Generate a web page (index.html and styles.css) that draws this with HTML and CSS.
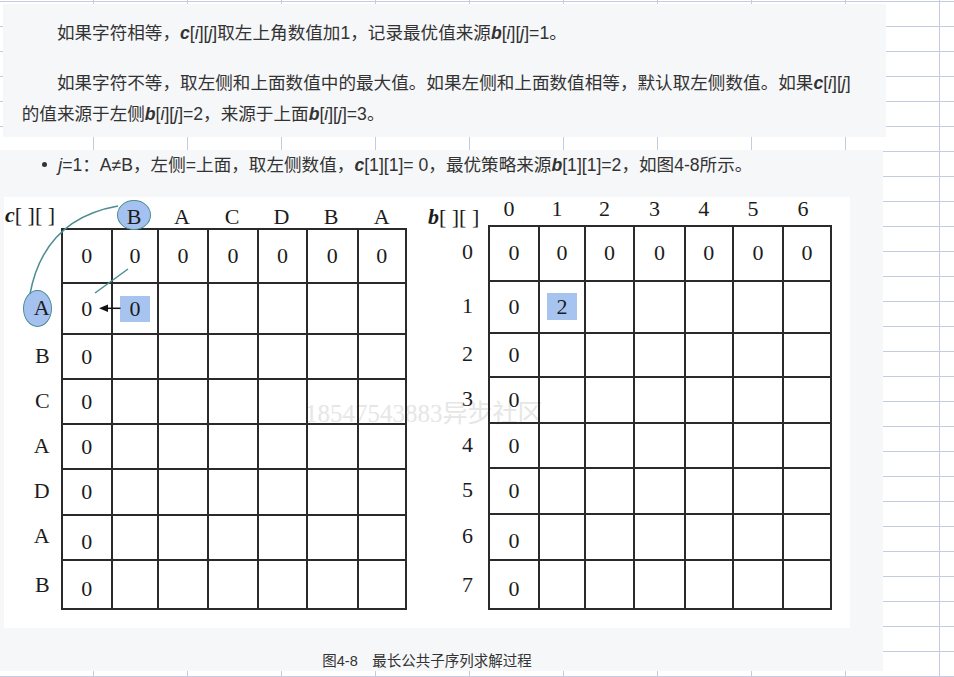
FILE: index.html
```html
<!DOCTYPE html>
<html lang="zh-CN">
<head>
<meta charset="utf-8">
<title>最长公共子序列求解过程</title>
<link rel="stylesheet" href="styles.css">
</head>
<body>
<div class="sheet">
  <section class="note">
    <p>如果字符相等，<span class="tok"><b><i>c</i></b>[<i>i</i>][<i>j</i>]</span><wbr>取左上角数值加1，记录最优值来源<span class="tok"><b><i>b</i></b>[<i>i</i>][<i>j</i>]=1</span>。</p>
    <p>如果字符不等，取左侧和上面数值中的最大值。如果左侧和上面数值相等，默认取左侧数值。如果<span class="tok"><b><i>c</i></b>[<i>i</i>][<i>j</i>]</span><wbr>的值来源于左侧<span class="tok"><b><i>b</i></b>[<i>i</i>][<i>j</i>]=2</span>，来源于上面<span class="tok"><b><i>b</i></b>[<i>i</i>][<i>j</i>]=3</span>。</p>
  </section>
  <section class="step">
    <ul class="bullets">
      <li><i>j</i>=1：A≠B，左侧=上面，取左侧数值，<span class="tok"><b><i>c</i></b>[1][1]= 0</span>，最优策略来源<span class="tok"><b><i>b</i></b>[1][1]=2</span>，如图4-8所示。</li>
    </ul>
    <figure class="fig">
      <div class="canvas">
        <span class="watermark">18547543883异步社区</span>
        <div class="dp dp-c">
          <div class="corner"><span><b><i>c</i></b>[ ][ ]</span></div><div class="h"></div><div class="h"><span class="ring ring-b">B</span></div><div class="h">A</div><div class="h">C</div><div class="h">D</div><div class="h">B</div><div class="h">A</div>
          <div class="l"></div><div class="c">0</div><div class="c">0</div><div class="c">0</div><div class="c">0</div><div class="c">0</div><div class="c">0</div><div class="c">0</div>
          <div class="l"><span class="ring ring-a">A</span></div><div class="c">0</div><div class="c"><span class="hl">0</span></div><div class="c"></div><div class="c"></div><div class="c"></div><div class="c"></div><div class="c"></div>
          <div class="l">B</div><div class="c">0</div><div class="c"></div><div class="c"></div><div class="c"></div><div class="c"></div><div class="c"></div><div class="c"></div>
          <div class="l">C</div><div class="c">0</div><div class="c"></div><div class="c"></div><div class="c"></div><div class="c"></div><div class="c"></div><div class="c"></div>
          <div class="l">A</div><div class="c">0</div><div class="c"></div><div class="c"></div><div class="c"></div><div class="c"></div><div class="c"></div><div class="c"></div>
          <div class="l">D</div><div class="c">0</div><div class="c"></div><div class="c"></div><div class="c"></div><div class="c"></div><div class="c"></div><div class="c"></div>
          <div class="l">A</div><div class="c dn">0</div><div class="c"></div><div class="c"></div><div class="c"></div><div class="c"></div><div class="c"></div><div class="c"></div>
          <div class="l">B</div><div class="c dn">0</div><div class="c"></div><div class="c"></div><div class="c"></div><div class="c"></div><div class="c"></div><div class="c"></div>
        </div>
        <div class="dp dp-b">
          <div class="corner"><span><b><i>b</i></b>[ ][ ]</span></div><div class="h">0</div><div class="h">1</div><div class="h">2</div><div class="h">3</div><div class="h">4</div><div class="h">5</div><div class="h">6</div>
          <div class="l">0</div><div class="c">0</div><div class="c">0</div><div class="c">0</div><div class="c">0</div><div class="c">0</div><div class="c">0</div><div class="c">0</div>
          <div class="l">1</div><div class="c">0</div><div class="c"><span class="hl">2</span></div><div class="c"></div><div class="c"></div><div class="c"></div><div class="c"></div><div class="c"></div>
          <div class="l">2</div><div class="c">0</div><div class="c"></div><div class="c"></div><div class="c"></div><div class="c"></div><div class="c"></div><div class="c"></div>
          <div class="l">3</div><div class="c">0</div><div class="c"></div><div class="c"></div><div class="c"></div><div class="c"></div><div class="c"></div><div class="c"></div>
          <div class="l">4</div><div class="c">0</div><div class="c"></div><div class="c"></div><div class="c"></div><div class="c"></div><div class="c"></div><div class="c"></div>
          <div class="l">5</div><div class="c">0</div><div class="c"></div><div class="c"></div><div class="c"></div><div class="c"></div><div class="c"></div><div class="c"></div>
          <div class="l">6</div><div class="c dn">0</div><div class="c"></div><div class="c"></div><div class="c"></div><div class="c"></div><div class="c"></div><div class="c"></div>
          <div class="l">7</div><div class="c dn">0</div><div class="c"></div><div class="c"></div><div class="c"></div><div class="c"></div><div class="c"></div><div class="c"></div>
        </div>
        <svg class="marks" viewBox="0 0 846 431" width="846" height="431" aria-hidden="true">
          <path d="M26 97 Q40 22 114 9" fill="none" stroke="#4a8e93" stroke-width="1.5"/>
          <line x1="91" y1="96" x2="124" y2="72" stroke="#4a8e93" stroke-width="1.5"/>
          <line x1="102" y1="111.3" x2="116.5" y2="111.3" stroke="#111" stroke-width="1.5"/>
          <polygon points="95,111.3 104,107.6 104,115" fill="#111"/>
        </svg>
      </div>
      <figcaption>图4-8　最长公共子序列求解过程</figcaption>
    </figure>
  </section>
</div>
</body>
</html>
```

FILE: styles.css
```css
* { box-sizing: border-box; }
html, body { margin: 0; padding: 0; }
body {
  width: 954px;
  height: 677px;
  overflow: hidden;
  font-family: "Liberation Sans", "Noto Sans CJK SC", sans-serif;
  color: #333;
}
.sheet {
  height: 677px;
  padding-top: 4px;
  background-color: #fff;
  background-image:
    linear-gradient(to bottom, #c6cce0 1px, transparent 1px),
    linear-gradient(to right, #c6cce0 1px, transparent 1px);
  background-size: 100% 25px, 94px 100%;
  background-position: 0 1px, 93px 0;
}
.tok { white-space: nowrap; }
.note {
  margin-left: 3px;
  width: 883px;
  height: 133px;
  padding: 13.5px 28px 0 18.7px;
  background: #f6f7f9;
}
.note p {
  margin: 0;
  font-size: 17.6px;
  line-height: 31.6px;
  text-indent: 2em;
}
.note p + p { margin-top: 18.5px; }

.step {
  margin-top: 13px;
  width: 883px;
  height: 521px;
  padding-left: 4px;
  background: #f6f7f9;
}
.bullets {
  margin: 0;
  padding: 0 0 0 38px;
  list-style: none;
  font-size: 17.6px;
  line-height: 30px;
}
.bullets li::before {
  content: "";
  display: inline-block;
  width: 5px;
  height: 5px;
  border-radius: 50%;
  background: #333;
  margin-right: 11.3px;
  vertical-align: 4px;
}
.fig { margin: 17px 0 0; width: 846px; }
.canvas {
  position: relative;
  width: 846px;
  height: 431px;
  background: #fff;
  display: flex;
  gap: 17px;
}
.fig figcaption {
  margin-top: 23px;
  text-align: center;
  font-size: 14.5px;
  line-height: 20px;
  color: #333;
}
.watermark {
  position: absolute;
  left: 301px;
  top: 204px;
  font-family: "Liberation Serif", "Noto Sans CJK SC", serif;
  font-size: 25px;
  line-height: 25px;
  color: #e6e6e6;
  white-space: nowrap;
}
.dp {
  position: relative;
  display: grid;
  font-family: "Liberation Serif", "Noto Sans CJK SC", serif;
  font-size: 22px;
  line-height: 22px;
  color: #1c1c1c;
  align-self: flex-start;
}
.dp-c {
  grid-template-columns: 56.7px 50px 46.6px 49.4px 50.6px 48.4px 51px 50.3px;
  grid-template-rows: 31.3px 54px 51px 45px 45px 45px 45.4px 45.6px 51px;
}
.dp-b {
  grid-template-columns: 64px 50px 46px 49.3px 50.7px 47.7px 50.6px 49.7px;
  grid-template-rows: 28px 54.7px 52px 44.6px 46px 45px 45.7px 46px 51.3px;
}
.dp > div {
  display: flex;
  align-items: center;
  justify-content: center;
}
.dp .h { align-items: flex-end; }
.dp-b .h { padding: 0 8px 4.7px 0; }
.dp .corner {
  justify-content: flex-start;
  align-items: flex-end;
  white-space: pre;
}
.dp-c .corner { padding: 0 0 2px 1px; }
.dp-b .corner { padding-left: 4px; }
.dp-b .corner span { margin-bottom: -3px; }
.dp .l { justify-content: flex-end; padding-right: 11px; }
.dp-b .l { padding-right: 15px; }
.dp .c {
  border-left: 2px solid #2a2a2a;
  border-top: 2px solid #2a2a2a;
}
.dp .c:nth-child(8n) { border-right: 2px solid #2a2a2a; }
.dp .c:nth-last-child(-n+7) { border-bottom: 2px solid #2a2a2a; }
.dp .dn { padding-top: 9px; }
.hl {
  width: 30px;
  height: 26px;
  line-height: 26px;
  text-align: center;
  background: #a7c4f1;
}
.dp-b .hl { height: 27px; line-height: 27px; }
.ring {
  position: relative;
  z-index: 0;
}
.ring::before {
  content: "";
  position: absolute;
  z-index: -1;
  border-radius: 50%;
  background: #a5c1ef;
  border: 1.5px solid #4a8e93;
}
.ring-b::before { left: -9.6px; right: -9.4px; top: -6px; bottom: -2px; }
.ring-a::before { left: -11px; right: -2px; top: -7px; bottom: -8px; }
.marks {
  position: absolute;
  left: 0;
  top: 0;
  pointer-events: none;
  overflow: visible;
}
```
